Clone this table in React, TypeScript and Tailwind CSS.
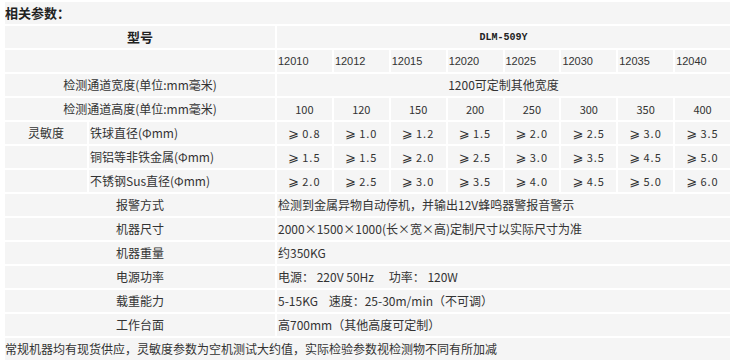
const font = "font-['Noto_Sans_CJK_SC','DejaVu_Sans',sans-serif]";

const models = ["12010", "12012", "12015", "12020", "12025", "12030", "12035", "12040"];
const heights = ["100", "120", "150", "200", "250", "300", "350", "400"];

const sensitivity = [
  { group: "灵敏度", label: "铁球直径(Φmm)", values: ["0.8", "1.0", "1.2", "1.5", "2.0", "2.5", "3.0", "3.5"] },
  { group: "", label: "铜铝等非铁金属(Φmm)", values: ["1.5", "1.5", "2.0", "2.5", "3.0", "3.5", "4.5", "5.0"] },
  { group: "", label: "不锈钢Sus直径(Φmm)", values: ["2.0", "2.5", "3.0", "3.5", "4.0", "4.5", "5.0", "6.0"] },
];

const specs = [
  { label: "报警方式", value: "检测到金属异物自动停机，并输出12V蜂鸣器警报音警示" },
  { label: "机器尺寸", value: "2000×1500×1000(长×宽×高)定制尺寸以实际尺寸为准" },
  { label: "机器重量", value: "约350KG" },
  { label: "电源功率", value: "电源： 220V 50Hz 　功率： 120W" },
  { label: "载重能力", value: "5-15KG    速度：25-30m/min（不可调）" },
  { label: "工作台面", value: "高700mm（其他高度可定制）" },
];

const cell = "bg-[#f5f5f5] flex items-center overflow-hidden whitespace-pre";

export default function App() {
  return (
    <div className={`w-[730px] h-[361px] overflow-hidden bg-white pl-[5px] pt-[2px] text-[12px] text-[#333] ${font}`}>
      <div className="grid grid-cols-[82px_186px_repeat(8,minmax(0,1fr))] auto-rows-[22px] gap-[2px]">
        <div className={`${cell} col-span-10 font-bold text-[13px] text-[#222]`}>相关参数：</div>

        <div className={`${cell} col-span-2 justify-center font-bold text-[13px] text-[#222]`}>型号</div>
        <div className={`${cell} col-span-8 justify-center font-bold text-[10px] text-[#222] font-['Liberation_Mono',monospace]`}>
          DLM-509Y
        </div>

        <div className={`${cell} col-span-2`} />
        {models.map((m) => (
          <div key={m} className={`${cell} pl-[1px] text-[11px] font-['Liberation_Sans',sans-serif]`}>
            {m}
          </div>
        ))}

        <div className={`${cell} col-span-2 justify-center`}>检测通道宽度(单位:mm毫米)</div>
        <div className={`${cell} col-span-8 justify-center`}>1200可定制其他宽度</div>

        <div className={`${cell} col-span-2 justify-center`}>检测通道高度(单位:mm毫米)</div>
        {heights.map((h) => (
          <div key={h} className={`${cell} justify-center text-[11px]`}>
            {h}
          </div>
        ))}

        {sensitivity.map((row) => (
          <div key={row.label} className="contents">
            <div className={`${cell} justify-center`}>{row.group}</div>
            <div className={`${cell} pl-[1px]`}>{row.label}</div>
            {row.values.map((v, i) => (
              <div key={i} className={`${cell} justify-center text-[11px] tracking-[1px]`}>
                <span className="text-[13px] mr-[2px]">⩾</span>
                {v}
              </div>
            ))}
          </div>
        ))}

        {specs.map((s) => (
          <div key={s.label} className="contents">
            <div className={`${cell} col-span-2 justify-center`}>{s.label}</div>
            <div className={`${cell} col-span-8 pl-[1px]`}>{s.value}</div>
          </div>
        ))}

        <div className={`${cell} col-span-10`}>
          常规机器均有现货供应，灵敏度参数为空机测试大约值，实际检验参数视检测物不同有所加减
        </div>
      </div>
    </div>
  );
}
